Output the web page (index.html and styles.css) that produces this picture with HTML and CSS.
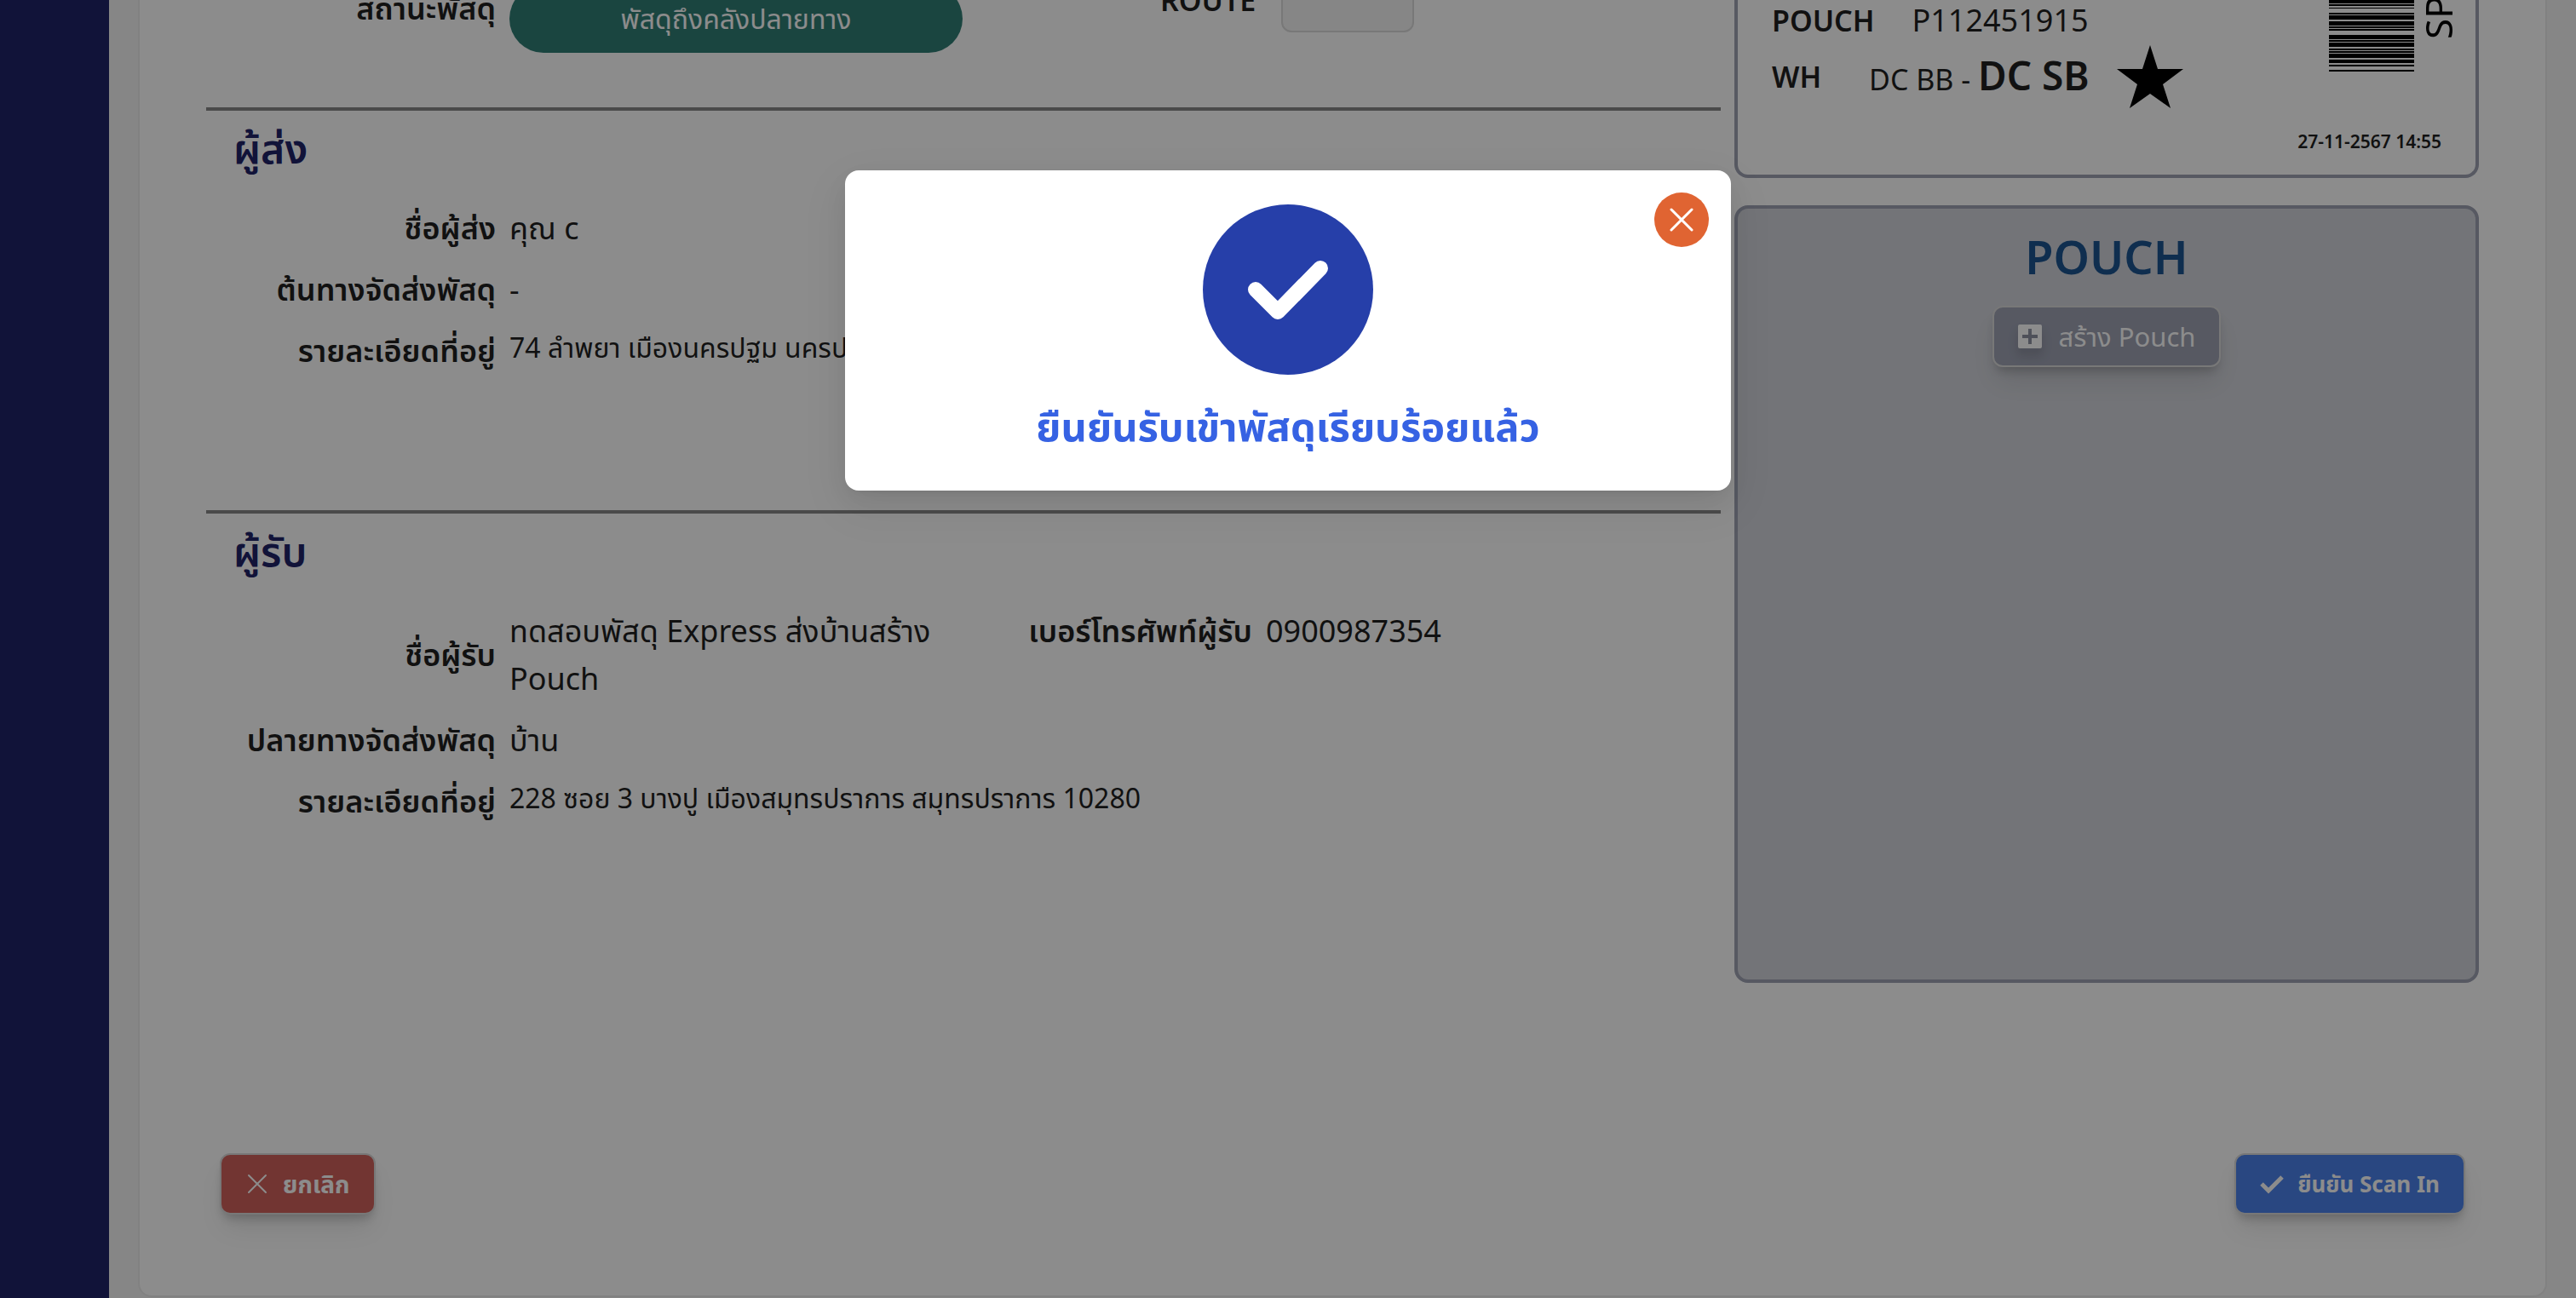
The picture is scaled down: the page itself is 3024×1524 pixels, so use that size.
FILE: index.html
```html
<!DOCTYPE html>
<html lang="th">
<head>
<meta charset="utf-8">
<title>Scan In</title>
<link rel="stylesheet" href="styles.css">
</head>
<body>
<div class="app">
  <nav class="sidebar" aria-label="เมนู"></nav>
  <main class="content">
    <div class="card">
      <div class="columns">
        <div class="details">
          <section class="status">
            <div class="field">
              <span class="label">สถานะพัสดุ</span>
              <span class="pill">พัสดุถึงคลังปลายทาง</span>
            </div>
            <div class="route">
              <label class="label latin" for="route">ROUTE</label>
              <input class="route-input" id="route" type="text" disabled>
            </div>
          </section>
          <section class="party">
            <h2 class="party-title">ผู้ส่ง</h2>
            <div class="fields">
              <div class="field"><span class="label">ชื่อผู้ส่ง</span><span class="value">คุณ c</span></div>
              <div class="field"><span class="label">ต้นทางจัดส่งพัสดุ</span><span class="value">-</span></div>
              <div class="field"><span class="label">รายละเอียดที่อยู่</span><span class="value address">74 ลำพยา เมืองนครปฐม นครปฐม 73000</span></div>
            </div>
          </section>
          <section class="party">
            <h2 class="party-title">ผู้รับ</h2>
            <div class="fields">
              <div class="pair">
                <div class="field"><span class="label">ชื่อผู้รับ</span><span class="value">ทดสอบพัสดุ Express ส่งบ้านสร้าง Pouch</span></div>
                <div class="field phone"><span class="label">เบอร์โทรศัพท์ผู้รับ</span><span class="value">0900987354</span></div>
              </div>
              <div class="field"><span class="label">ปลายทางจัดส่งพัสดุ</span><span class="value">บ้าน</span></div>
              <div class="field"><span class="label">รายละเอียดที่อยู่</span><span class="value address">228 ซอย 3 บางปู เมืองสมุทรปราการ สมุทรปราการ 10280</span></div>
            </div>
          </section>
        </div>
        <aside class="side">
          <section class="parcel-label">
            <div class="parcel-main">
              <dl class="parcel-info">
                <div class="parcel-row"><dt class="latin">POUCH</dt><dd>P112451915</dd></div>
                <div class="parcel-row">
                  <dt class="latin">WH</dt>
                  <dd class="latin warehouse">DC BB - <strong class="dest">DC SB</strong></dd>
                  <dd class="mark"><svg class="star" viewBox="0 0 78 74" aria-hidden="true"><path d="M39 0 48 28H78L54 46 63 74 39 57 15 74 24 46 0 28H30Z"/></svg></dd>
                </div>
              </dl>
              <div class="barcode">
                <svg class="bars" viewBox="0 0 100 84" preserveAspectRatio="none" aria-hidden="true"><path d="M0 0h100v4H0zM0 5h100v2H0zM0 9h100v1H0zM0 15h100v2H0zM0 18h100v5H0zM0 25h100v5H0zM0 31h100v2H0zM0 34h100v2H0zM0 41h100v5H0zM0 47h100v2H0zM0 50h100v5H0zM0 57h100v2H0zM0 60h100v2H0zM0 63h100v5H0zM0 70h100v4H0zM0 76h100v2H0zM0 82h100v2H0z"/></svg>
                <span class="code">SP</span>
              </div>
            </div>
            <time class="printed">27-11-2567 14:55</time>
          </section>
          <section class="pouch">
            <h2 class="pouch-title">POUCH</h2>
            <button class="btn btn-create" type="button">
              <svg class="icon" viewBox="0 0 28 28" aria-hidden="true"><path fill-rule="evenodd" fill="currentColor" d="M2 0h24a2 2 0 0 1 2 2v24a2 2 0 0 1-2 2H2a2 2 0 0 1-2-2V2a2 2 0 0 1 2-2zM12 5v7H5v4h7v7h4v-7h7v-4h-7V5z"/></svg>
              สร้าง Pouch
            </button>
          </section>
        </aside>
      </div>
      <div class="actions">
        <button class="btn btn-cancel" type="button">
          <svg class="icon" viewBox="0 0 28 28" aria-hidden="true"><path fill="none" stroke="currentColor" stroke-width="2" stroke-linecap="round" d="M4 4 24 24M24 4 4 24"/></svg>
          ยกเลิก
        </button>
        <button class="btn btn-confirm" type="button">
          <svg class="icon" viewBox="0 0 28 28" aria-hidden="true"><path fill="none" stroke="currentColor" stroke-width="5" d="M2 14 10 22 26 6"/></svg>
          ยืนยัน Scan In
        </button>
      </div>
    </div>
  </main>
</div>
<div class="overlay">
  <div class="modal" role="dialog" aria-modal="true" aria-labelledby="modal-title">
    <button class="close" type="button" aria-label="ปิด">
      <svg viewBox="0 0 32 32" aria-hidden="true"><path fill="none" stroke="currentColor" stroke-width="3" stroke-linecap="round" d="M4 4 28 28M28 4 4 28"/></svg>
    </button>
    <svg class="check" viewBox="0 0 200 200" aria-hidden="true"><circle cx="100" cy="100" r="100" fill="#263fa9"/><path fill="none" stroke="#fff" stroke-width="18" stroke-linecap="round" stroke-linejoin="round" d="M62 100 88 126 138 75"/></svg>
    <h1 class="modal-title" id="modal-title">ยืนยันรับเข้าพัสดุเรียบร้อยแล้ว</h1>
  </div>
</div>
</body>
</html>
```
FILE: styles.css
```css
*, *::before, *::after { box-sizing: border-box; }

body {
  margin: 0;
  height: 100vh;
  overflow: hidden;
  background: #f4f4f4;
  color: #1f1f1f;
  font: 400 36px/56px "Noto Sans", "Noto Sans Thai", sans-serif;
}

h1, h2, dl, dd { margin: 0; }
button, input { font: inherit; }

.app { display: flex; height: 100vh; }
.sidebar { flex: 0 0 128px; background: #1f2369; }

.content { flex: 1; padding: 0 34px 1px; display: flex; }

/* The page is scrolled: the card's top edge is above the window. */
.card {
  flex: 1;
  margin-top: -40px;
  padding: 0 78px;
  border: 2px solid #ececec;
  border-radius: 16px;
  background: #fff;
}

.columns { display: grid; grid-template-columns: minmax(0, 1fr) 874px; gap: 16px; }

.label { font-weight: 600; text-align: right; }
.latin { font-size: 34px; }

.field { display: grid; grid-template-columns: 340px minmax(0, 1fr); gap: 16px; align-items: center; }

.status { display: flex; height: 164px; padding-top: 20px; align-items: flex-start; }
.status .field { grid-template-columns: 340px 532px; align-items: start; }
.pill {
  padding: 16px;
  border-radius: 40px;
  background: #317e76;
  color: #fff;
  font-size: 32px;
  line-height: 48px;
  text-align: center;
}
.route { display: flex; align-items: flex-start; gap: 30px; margin-left: 232px; }
.route .label { line-height: 36px; }
.route-input {
  width: 156px;
  height: 56px;
  border: 2px solid #dadada;
  border-radius: 12px;
  background: #f4f4f4;
}

.party { height: 473px; border-top: 4px solid #888; }
.party-title { padding: 12px 32px 0; color: #1f2369; font-size: 48px; font-weight: 600; line-height: 64px; }
.fields { display: grid; gap: 16px; padding-top: 34px; }
.address { align-self: start; font-size: 32px; line-height: 48px; }
.pair { display: grid; grid-template-columns: 888px minmax(0, 1fr); align-items: start; }
.pair .phone { grid-template-columns: 340px minmax(0, 1fr); }

.side { display: grid; gap: 32px; align-content: start; }
.parcel-label { height: 247px; padding: 34px 24px 0 40px; border: 4px solid #9ea2b3; border-top: 0; border-radius: 16px; }
.parcel-main { display: flex; justify-content: space-between; height: 154px; }
.parcel-info { display: flex; flex-direction: column; gap: 10px; }
.parcel-row { display: flex; align-items: center; height: 56px; }
.parcel-row dt { margin-right: 44px; font-weight: 600; }
.warehouse { padding-left: 12px; }
.dest { font-size: 46px; font-weight: 600; }
.mark { display: flex; margin-left: 32px; }
.star { width: 78px; height: 74px; }
.barcode { display: flex; align-items: flex-start; gap: 8px; padding-top: 4px; }
.bars { width: 100px; height: 84px; }
.code { writing-mode: vertical-rl; transform: rotate(180deg); height: 46px; color: #000; font-size: 44px; line-height: 40px; }
.printed { display: block; padding-right: 16px; text-align: right; font-size: 21px; font-weight: 600; line-height: 32px; }

.pouch { height: 913px; padding-top: 20px; border: 4px solid #9ea2b3; border-radius: 16px; background: #d1d3da; text-align: center; }
.pouch-title { color: #1c5590; font-size: 54px; font-weight: 600; line-height: 72px; }

.btn {
  display: inline-flex;
  align-items: center;
  gap: 16px;
  height: 72px;
  padding: 0 28px;
  border: 2px solid #dadada;
  border-radius: 12px;
  color: #fff;
  font-size: 28px;
  font-weight: 700;
  box-shadow: 0 20px 30px -6px rgba(0, 0, 0, .1), 0 8px 12px -4px rgba(0, 0, 0, .2);
}
.icon { width: 28px; height: 28px; }
.btn-create { gap: 20px; margin-top: 22px; background: #9ea2b3; font-size: 31px; font-weight: 400; }
.btn-create .icon { filter: drop-shadow(0 8px 6px rgba(0, 0, 0, .15)); }
.btn-cancel { background: #d0625c; }
.btn-confirm { background: #4c82eb; font-size: 26px; }

.actions { display: flex; justify-content: space-between; padding: 200px 16px 96px; }

.overlay {
  position: fixed;
  inset: 0;
  padding-top: 200px;
  background: rgba(0, 0, 0, .45);
}
.modal {
  position: relative;
  width: 1040px;
  margin: 0 auto;
  padding: 40px 48px 38px;
  border-radius: 16px;
  background: #fff;
  text-align: center;
  box-shadow: 0 12px 32px rgba(0, 0, 0, .08), 0 6px 12px -8px rgba(0, 0, 0, .12), 0 18px 56px 16px rgba(0, 0, 0, .05);
}
.check { display: block; width: 200px; height: 200px; margin: 0 auto 22px; }
.modal-title { color: #3662e3; font-size: 47px; font-weight: 700; line-height: 76px; }
.close {
  position: absolute;
  top: 26px;
  right: 26px;
  display: flex;
  align-items: center;
  justify-content: center;
  width: 64px;
  height: 64px;
  padding: 0;
  border: 0;
  border-radius: 50%;
  background: #e06432;
  color: #fff;
}
.close svg { width: 32px; height: 32px; }
```
